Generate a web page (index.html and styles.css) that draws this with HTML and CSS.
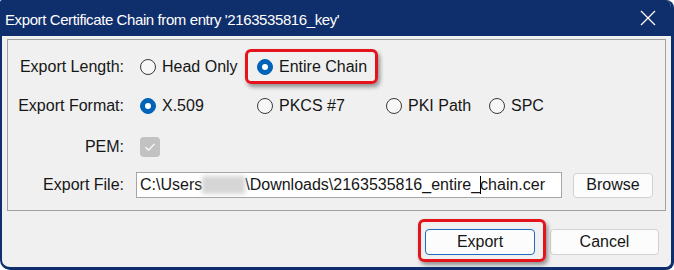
FILE: index.html
```html
<!DOCTYPE html>
<html>
<head>
    <link rel="stylesheet" href="styles.css">
</head>
<body>
    <div class="window">
        <div class="titlebar">
            <span class="title">Export Certificate Chain from entry '2163535816_key'</span>
            <span class="close">
                <svg width="16" height="16" viewBox="0 0 16 16">
                    <path d="M1 1 L15 15 M15 1 L1 15" stroke="#fff" stroke-width="1.3" fill="none"/>
                </svg>
            </span>
        </div>
        <div class="content">
            <div class="panel">
                <span class="lbl">Export Length:</span>
                <div class="options">
                    <label class="opt"><span class="radio"></span>Head Only</label>
                    <label class="opt mark mark-opt"><span class="radio on"></span>Entire Chain</label>
                </div>

                <span class="lbl">Export Format:</span>
                <div class="options">
                    <label class="opt"><span class="radio on"></span>X.509</label>
                    <label class="opt"><span class="radio"></span>PKCS #7</label>
                    <label class="opt"><span class="radio"></span>PKI Path</label>
                    <label class="opt"><span class="radio"></span>SPC</label>
                </div>

                <span class="lbl">PEM:</span>
                <div class="options">
                    <span class="check">
                        <svg width="12" height="10" viewBox="0 0 12 10">
                            <path d="M1.5 5.2 L4.6 8.2 L10.5 1.8" stroke="#fff" stroke-width="1.2" fill="none"/>
                        </svg>
                    </span>
                </div>

                <span class="lbl">Export File:</span>
                <div class="filerow">
                    <div class="field">C:\Users<span class="blur"></span>\Downloads\2163535816_entire_<span class="caret"></span>chain.cer</div>
                    <button class="btn browse">Browse</button>
                </div>
            </div>

            <div class="footer">
                <span class="mark mark-btn"><button class="btn primary">Export</button></span>
                <button class="btn">Cancel</button>
            </div>
        </div>
    </div>
</body>
</html>
```

FILE: styles.css
```css
html
{
    background: #ffffff;
}
body
{
    margin: 0;
    font-family: "Liberation Sans", Arial, sans-serif;
    font-size: 16px;
    color: #161616;
}
.window
{
    box-sizing: border-box;
    width: 674px;
    height: 270px;
    background-color: #f0f0f0;
    border-left: 2px solid #0f2e6c;
    border-right: 3px solid #0f2e6c;
    border-bottom: 3px solid #0f2e6c;
    border-radius: 2px 8px 8px 10px;
    overflow: hidden;
    display: flex;
    flex-direction: column;
}
.titlebar
{
    height: 36px;
    flex: none;
    background-color: #0f2e6c;
    color: #ffffff;
    display: flex;
    align-items: center;
    padding-left: 3px;
    padding-top: 2px;
    box-sizing: border-box;
}
.title
{
    font-size: 15px;
    letter-spacing: -0.4px;
    flex: 1;
}
.close
{
    width: 16px;
    height: 16px;
    margin-right: 15px;
    margin-bottom: 2px;
}
.close svg
{
    display: block;
}
.content
{
    flex: 1;
    padding: 3px 5px 0 5px;
}
.panel
{
    border: 1px solid #a0a0a0;
    height: 172px;
    box-sizing: border-box;
    padding: 9px 12px 0 0;
    display: grid;
    grid-template-columns: 116px 1fr;
    grid-template-rows: 36px 42px 40px 36px;
    column-gap: 12px;
    align-items: center;
}
.lbl
{
    text-align: right;
}
.options
{
    display: grid;
    grid-template-columns: 117px 129px 103px auto;
    padding-left: 4px;
    align-items: center;
}
.opt
{
    display: inline-flex;
    align-items: center;
    justify-self: start;
    gap: 6px;
    height: 18px;
}
.radio
{
    box-sizing: border-box;
    width: 16px;
    height: 16px;
    border: 1px solid #3a3a3a;
    border-radius: 50%;
    background-color: #f7f7f7;
    position: relative;
}
.radio.on
{
    background-color: #0063b8;
    border-color: #0063b8;
}
.radio.on::after
{
    content: "";
    position: absolute;
    left: 4px;
    top: 4px;
    width: 6px;
    height: 6px;
    border-radius: 50%;
    background-color: #ffffff;
}
.check
{
    width: 20px;
    height: 20px;
    border-radius: 4px;
    background-color: #c2c2c2;
    display: flex;
    align-items: center;
    justify-content: center;
}
.filerow
{
    display: flex;
    align-items: center;
    gap: 11px;
}
.field
{
    box-sizing: border-box;
    width: 426px;
    height: 26px;
    border: 1px solid #a6a6a6;
    background-color: #ffffff;
    padding-left: 3px;
    line-height: 24px;
    white-space: nowrap;
    overflow: hidden;
}
.blur
{
    display: inline-block;
    width: 43px;
    height: 18px;
    vertical-align: -4px;
    background-color: #d6d6d6;
    filter: blur(2px);
}
.caret
{
    display: inline-block;
    width: 1px;
    height: 18px;
    margin-right: -1px;
    vertical-align: -4px;
    background-color: #000;
}
.btn
{
    font-family: "Liberation Sans", Arial, sans-serif;
    font-size: 16px;
    color: #161616;
    background-color: #fcfcfc;
    border: 1px solid #d2d2d2;
    border-radius: 4px;
    height: 26px;
    width: 109px;
    padding: 0;
}
.browse
{
    width: 80px;
    height: 25px;
}
.primary
{
    width: 110px;
    border-color: #1a6cc0;
    display: block;
}
.footer
{
    display: flex;
    justify-content: flex-end;
    gap: 15px;
    padding: 18px 7px 0 0;
}
.mark
{
    position: relative;
}
.mark::after
{
    content: "";
    position: absolute;
    border: 3px solid #e4141c;
    border-radius: 6px;
    box-shadow: 2px 3px 4px rgba(0, 0, 0, 0.4);
    pointer-events: none;
}
.mark-opt::after
{
    left: -12px;
    right: -11px;
    top: -9px;
    bottom: -8px;
}
.mark-btn::after
{
    left: -7px;
    right: -11px;
    top: -10px;
    bottom: -7px;
}
```
